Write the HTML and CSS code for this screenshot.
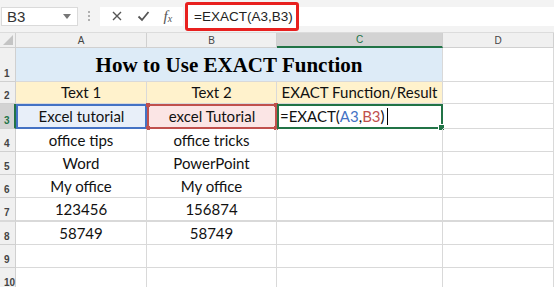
FILE: index.html
```html
<!DOCTYPE html>
<html lang="en">
<head>
  <meta charset="UTF-8">
  <title>EXACT Function</title>
  <link rel="stylesheet" href="styles.css">
</head>
<body>

  <div class="topbar">
    <div class="namebox">
      <span>B3</span>
      <svg width="8" height="5" viewBox="0 0 8 5"><path d="M0 0h8L4 5z" fill="#777"/></svg>
    </div>
    <div class="dots"><i></i><i></i><i></i></div>
    <div class="buttons">
      <svg width="12" height="12" viewBox="0 0 12 12"><path d="M2 2l8 8M10 2l-8 8" stroke="#555" stroke-width="1.4"/></svg>
      <svg width="13" height="12" viewBox="0 0 13 12"><path d="M1.5 6.5l3.5 3.5 6.5-8" stroke="#555" stroke-width="1.8" fill="none"/></svg>
      <span class="fx">f<sub>x</sub></span>
    </div>
    <div class="formula">
      <span class="highlight">=EXACT(A3,B3)</span>
    </div>
  </div>

  <div class="sheet">
    <div class="hd corner"><svg width="10" height="10" viewBox="0 0 10 10"><path d="M10 0v10H0z" fill="#c4c4c4"/></svg></div>
    <div class="hd col">A</div>
    <div class="hd col">B</div>
    <div class="hd col active-col">C</div>
    <div class="hd col">D</div>

    <div class="hd row">1</div>
    <div class="cell title">How to Use EXACT Function</div>
    <div class="cell"></div>

    <div class="hd row">2</div>
    <div class="cell head">Text 1</div>
    <div class="cell head">Text 2</div>
    <div class="cell head">EXACT Function/Result</div>
    <div class="cell"></div>

    <div class="hd row active-row">3</div>
    <div class="cell ref-a">Excel tutorial</div>
    <div class="cell ref-b">excel Tutorial<i class="dot tl"></i><i class="dot tr"></i><i class="dot bl"></i><i class="dot br"></i></div>
    <div class="cell editing">=EXACT(<span class="blue">A3</span>,<span class="red">B3</span>)<span class="caret"></span><i class="handle"></i></div>
    <div class="cell"></div>

    <div class="hd row">4</div>
    <div class="cell">office tips</div>
    <div class="cell">office tricks</div>
    <div class="cell"></div>
    <div class="cell"></div>

    <div class="hd row">5</div>
    <div class="cell">Word</div>
    <div class="cell">PowerPoint</div>
    <div class="cell"></div>
    <div class="cell"></div>

    <div class="hd row">6</div>
    <div class="cell">My office</div>
    <div class="cell">My office</div>
    <div class="cell"></div>
    <div class="cell"></div>

    <div class="hd row thick">7</div>
    <div class="cell thick">123456</div>
    <div class="cell thick">156874</div>
    <div class="cell thick"></div>
    <div class="cell thick"></div>

    <div class="hd row">8</div>
    <div class="cell">58749</div>
    <div class="cell">58749</div>
    <div class="cell"></div>
    <div class="cell"></div>

    <div class="hd row">9</div>
    <div class="cell"></div>
    <div class="cell"></div>
    <div class="cell"></div>
    <div class="cell"></div>

    <div class="hd row">10</div>
    <div class="cell"></div>
    <div class="cell"></div>
    <div class="cell"></div>
    <div class="cell"></div>
  </div>

</body>
</html>
```

FILE: styles.css
```css
body {
  margin: 0;
  width: 554px;
  height: 287px;
  overflow: hidden;
  background: #fff;
  font-family: Lato, "Open Sans", sans-serif;
}

/* formula bar */
.topbar {
  height: 33px;
  background: #f3f3f3;
  display: flex;
  align-items: center;
  border-bottom: 1px solid #dcdcdc;
  box-sizing: border-box;
}
.namebox {
  width: 77px;
  height: 19px;
  margin-left: 1px;
  background: #fff;
  border: 1px solid #dadada;
  box-sizing: border-box;
  display: flex;
  align-items: center;
  justify-content: space-between;
  padding: 0 6px 0 5px;
  font-family: "Liberation Sans", Arial, sans-serif;
  font-size: 15px;
  color: #333;
}
.dots {
  width: 22px;
  display: flex;
  flex-direction: column;
  align-items: center;
  gap: 2px;
}
.dots i {
  width: 2px;
  height: 2px;
  background: #b0b0b0;
}
.buttons {
  width: 83px;
  height: 19px;
  background: #fff;
  display: flex;
  align-items: center;
  justify-content: space-around;
  padding: 0 4px;
  box-sizing: border-box;
}
.fx {
  font-family: "Liberation Serif", serif;
  font-style: italic;
  font-size: 15px;
  color: #555;
  line-height: 1;
}
.fx sub {
  font-size: 10px;
  vertical-align: -1px;
}
.formula {
  flex: 1;
  height: 19px;
  margin-left: 2px;
  background: #fff;
  display: flex;
  align-items: center;
}
.highlight {
  height: 29px;
  width: 114px;
  box-sizing: border-box;
  border: 3px solid #e8201f;
  border-radius: 3px;
  display: flex;
  align-items: center;
  padding-left: 6px;
  font-family: "Liberation Sans", Arial, sans-serif;
  font-size: 13.5px;
  color: #222;
  background: #fff;
}

/* grid */
.sheet {
  display: grid;
  grid-template-columns: 16px 131px 130px 166px 111px;
  grid-template-rows: 15px 34px 22px 25px 23px 23px 23px 24px 23px 23px 23px;
}
.hd {
  background: #f0f0f0;
  border-right: 1px solid #d0d0d0;
  border-bottom: 1px solid #d0d0d0;
  color: #444;
  font-family: "Liberation Sans", Arial, sans-serif;
  font-size: 10px;
  box-sizing: border-box;
}
.corner {
  display: flex;
  align-items: flex-end;
  justify-content: flex-end;
  padding: 0 2px 2px 0;
}
.col {
  display: flex;
  align-items: center;
  justify-content: center;
}
.active-col {
  background: #d3d3d3;
  border-bottom: 2px solid #217346;
  color: #217346;
}
.row {
  display: flex;
  align-items: flex-end;
  padding: 0 0 2px 4px;
  font-weight: bold;
  font-size: 10px;
}
.active-row {
  background: #d3d3d3;
  border-right: 2px solid #217346;
  color: #217346;
}
.cell {
  position: relative;
  border-right: 1px solid #d9d9d9;
  border-bottom: 1px solid #d9d9d9;
  box-sizing: border-box;
  display: flex;
  align-items: flex-end;
  justify-content: center;
  padding-bottom: 2px;
  font-size: 15px;
  color: #111;
}
.thick {
  border-bottom: 2px solid #d9d9d9;
}
.title {
  grid-column: span 3;
  background: #ddebf7;
  font-family: "Liberation Serif", serif;
  font-weight: bold;
  font-size: 21px;
  color: #000;
  padding-bottom: 3px;
}
.head {
  background: #fff2cc;
}
.ref-a {
  background: #e8eff9;
  border: 2px solid #4472c4;
}
.ref-b {
  background: #fbe5e5;
  border: 2px solid #c0504d;
}
.dot {
  position: absolute;
  width: 4px;
  height: 4px;
  background: #c0504d;
}
.tl { left: -3px; top: -3px; }
.tr { right: -3px; top: -3px; }
.bl { left: -3px; bottom: -3px; }
.br { right: -3px; bottom: -3px; }
.editing {
  border: 2px solid #217346;
  justify-content: flex-start;
  padding-left: 1px;
}
.blue { color: #4472c4; }
.red { color: #c0504d; }
.caret {
  width: 1px;
  height: 17px;
  background: #000;
  margin-left: 2px;
}
.handle {
  position: absolute;
  right: -4px;
  bottom: -4px;
  width: 5px;
  height: 5px;
  background: #217346;
  border: 1px solid #fff;
}
```
